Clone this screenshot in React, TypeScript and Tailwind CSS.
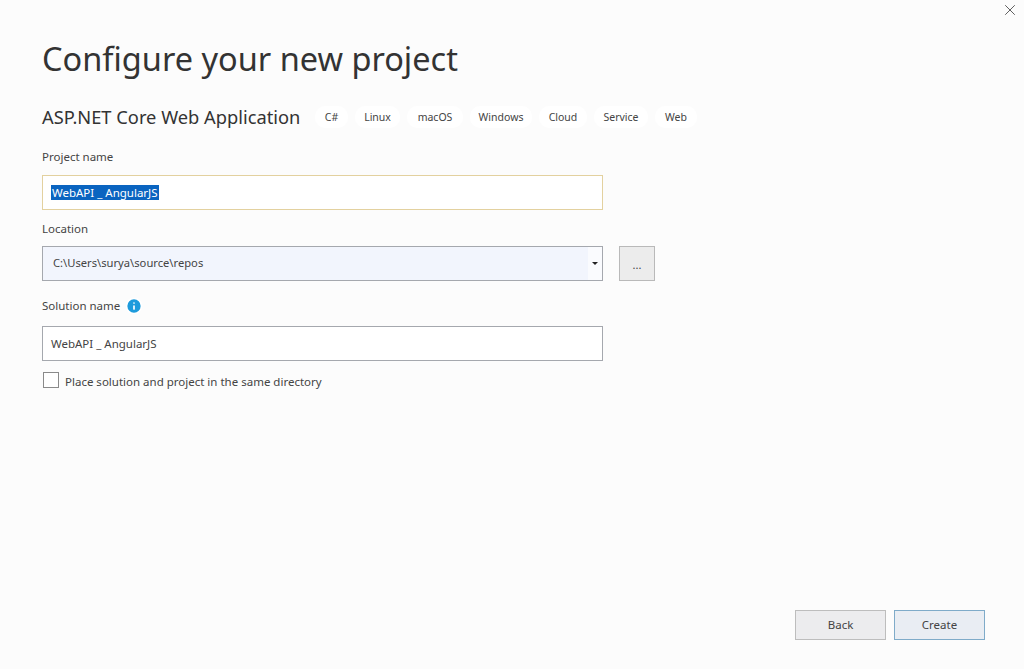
import { Info, X } from "lucide-react";

const tags = [
  { label: "C#", width: "w-[33px]" },
  { label: "Linux", width: "w-[45px]" },
  { label: "macOS", width: "w-[56px]" },
  { label: "Windows", width: "w-[62px]" },
  { label: "Cloud", width: "w-[48px]" },
  { label: "Service", width: "w-[54px]" },
  { label: "Web", width: "w-[42px]" },
];

const App = () => {
  return (
    <div className="relative flex h-[669px] w-[1024px] flex-col overflow-hidden bg-[#fcfcfc] pl-[42px] font-['Noto_Sans','Open_Sans',sans-serif] text-[#444]">
      {/* Close */}
      <button className="absolute right-[5px] top-[1px] text-[#555]">
        <X className="h-[18px] w-[18px]" strokeWidth={1.25} />
      </button>

      <h1 className="mt-[37px] h-[44px] text-[32.5px] leading-[44px] text-[#333]">
        Configure your new project
      </h1>

      {/* Subtitle and tags */}
      <div className="mt-[23px] flex h-[26px] items-center">
        <h2 className="w-[273px] text-[18.3px] leading-[26px] text-[#333]">
          ASP.NET Core Web Application
        </h2>
        <div className="flex gap-[7px]">
          {tags.map((tag) => (
            <span
              key={tag.label}
              className={`${tag.width} rounded-[10px] bg-white text-center text-[10.5px] leading-[22px] text-[#444]`}
            >
              {tag.label}
            </span>
          ))}
        </div>
      </div>

      {/* Project name */}
      <label className="mt-[18px] text-[11.5px] leading-[18px]">Project name</label>
      <div className="mt-[9px] flex h-[35px] w-[561px] items-center border border-[#e3d19f] bg-white pl-[8px]">
        <span className="bg-[#0a64c0] px-[1px] text-[11.5px] leading-[15px] text-white">
          WebAPI _ AngularJS
        </span>
      </div>

      {/* Location */}
      <label className="mt-[10px] text-[11.5px] leading-[18px]">Location</label>
      <div className="mt-[8px] flex items-center gap-[16px]">
        <div className="flex h-[35px] w-[561px] items-center border border-[#a5a8ae] bg-[#f2f5fd] pl-[10px]">
          <span className="flex-1 text-[11.2px]">C:\Users\surya\source\repos</span>
          <div className="flex h-full w-[14px] items-center justify-center bg-[#fafbfe]">
            <div className="h-0 w-0 border-x-[3px] border-t-[3px] border-x-transparent border-t-[#222]" />
          </div>
        </div>
        <button className="h-[35px] w-[36px] border border-[#b9b9b9] bg-[#ececec] text-[11px] leading-[35px] text-[#444]">
          ...
        </button>
      </div>

      {/* Solution name */}
      <div className="mt-[16px] flex h-[18px] items-center gap-[5px]">
        <label className="text-[11.5px] leading-[18px]">Solution name</label>
        <Info className="h-[18px] w-[18px] fill-[#1e9bdc] text-white" strokeWidth={2.25} />
      </div>
      <div className="mt-[11px] flex h-[35px] w-[561px] items-center border border-[#a5a8ae] bg-white pl-[8px] text-[11.5px]">
        WebAPI _ AngularJS
      </div>

      {/* Same directory */}
      <div className="mt-[11px] flex items-start gap-[6px] pl-[1px]">
        <div className="h-[16px] w-[16px] border border-[#8a8a8a] bg-white" />
        <span className="mt-[1px] text-[11.5px] leading-[18px]">
          Place solution and project in the same directory
        </span>
      </div>

      {/* Footer */}
      <div className="mt-auto flex justify-end gap-[8px] pb-[29px] pr-[39px]">
        <button className="h-[30px] w-[91px] border border-[#bdbdbd] bg-[#ececee] text-[11.5px] text-[#444]">
          Back
        </button>
        <button className="h-[30px] w-[91px] border border-[#7fabc9] bg-[#e9edf3] text-[11.5px] text-[#444]">
          Create
        </button>
      </div>
    </div>
  );
};

export default App;
